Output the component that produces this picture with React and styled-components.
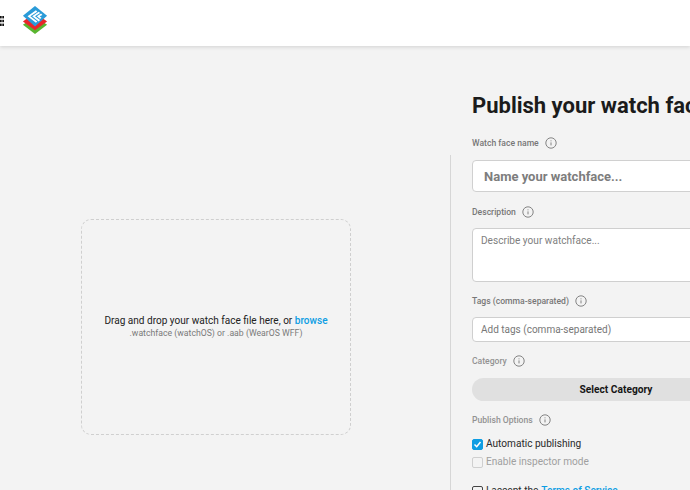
import React from "react";
import styled, { createGlobalStyle } from "styled-components";

const Global = createGlobalStyle`
  html, body { margin: 0; padding: 0; width: 690px; height: 490px; overflow: hidden; background: #f3f3f3; }
  body { font-family: Roboto, "Liberation Sans", sans-serif; color: #1a1a1a; }
  * { box-sizing: border-box; }
`;

const Header = styled.header`
  height: 46px; background: #fff; display: flex; align-items: center;
  box-shadow: 0 1px 4px rgba(0,0,0,.14); position: relative;
`;
const Grip = styled.svg`
  width: 4px; height: 10px; flex: none; align-self: flex-start; margin: 16px 18px 0 0; display: block;
`;
const Logo = styled.svg`
  width: 26px; height: 28px; flex: none; margin-bottom: 6px; display: block;
`;
const Main = styled.main`display: flex; align-items: flex-start;`;
const LeftPane = styled.section`
  flex: none; width: 451px; height: 335px; margin-top: 109px; border-right: 1px solid #d6d6d6;
  padding: 64px 0 0 81px;
`;
const Dropzone = styled.div`
  width: 270px; height: 216px; border: 1px dashed #cfcfcf; border-radius: 10px;
  display: flex; flex-direction: column; align-items: center; justify-content: center; padding-bottom: 1px;
`;
const DropText = styled.div`font-size: 10.05px; line-height: 13px; color: #222; white-space: nowrap;`;
const Browse = styled.a`color: #0d9de3; font-weight: 500;`;
const DropHint = styled.div`font-size: 8.7px; line-height: 11px; color: #7a7a7a; margin-top: 1px; white-space: nowrap;`;
const RightPane = styled.section`
  flex: none; width: 520px; margin-left: 21px; padding-top: 46px;
`;
const Title = styled.h1`
  font-size: 22px; line-height: 28px; font-weight: 700; margin: 0 0 16px; color: #1b1b1b; white-space: nowrap;
`;
const LabelRow = styled.div`
  display: flex; align-items: center; gap: 6px; height: 14px;
  font-size: 8.6px; font-weight: 500; color: ${p => p.$muted ? "#929292" : "#777"};
  margin-top: ${p => p.$top || 0}px;
`;
const InfoIcon = styled.svg`width: 12px; height: 12px; flex: none;`;
const NameInput = styled.div`
  height: 32px; margin-top: 10px; background: #fff; border: 1px solid #d0d0d0; border-radius: 4px;
  display: flex; align-items: center; padding-left: 11px; font-size: 13px; font-weight: 700; color: #7d7d7d;
`;
const TextArea = styled.div`
  height: 54px; margin-top: 9px; background: #fff; border: 1px solid #cfcfcf; border-radius: 4px;
  padding: 5px 8px; font-size: 10.1px; line-height: 14px; color: #808080;
`;
const TagsInput = styled.div`
  height: 25px; margin-top: 9px; background: #fff; border: 1px solid #cfcfcf; border-radius: 4px;
  display: flex; align-items: center; padding-left: 8px; font-size: 10px; color: #777;
`;
const SelectButton = styled.button`
  display: block; width: 288px; height: 23px; margin-top: 10px; border: 0; border-radius: 12px; background: #e0e0e0;
  font-family: inherit; font-size: 10.2px; font-weight: 700; color: #161616; padding: 0;
`;
const CheckRow = styled.label`
  display: flex; align-items: center; gap: 3px; height: 18px; font-size: 10.1px;
  color: ${p => p.$disabled ? "#a0a0a0" : "#2a2a2a"}; margin-top: ${p => p.$top || 0}px;
`;
const Box = styled.span`
  width: 11px; height: 11px; border-radius: 2px; flex: none; display: flex; align-items: center; justify-content: center;
  margin-top: 2px;
  background: ${p => p.$checked ? "#0d9de3" : "transparent"};
  border: 1px solid ${p => p.$checked ? "#0d9de3" : p.$disabled ? "#cfcfcf" : "#444"};
`;
const Terms = styled.a`color: #0d9de3; font-weight: 500;`;

const Info = () => (
  <InfoIcon viewBox="0 0 12 12" fill="none" stroke="#777" strokeWidth="0.9">
    <circle cx="6" cy="6" r="5.2" />
    <path d="M6 5.4v3" />
    <path d="M6 3.4v.9" />
  </InfoIcon>
);

export default function App() {
  return (
    <>
      <Global />
      <Header>
        <Grip viewBox="0 0 4 10" fill="#111">
          <rect x="0" y="0" width="1.7" height="2.4" />
          <rect x="2.3" y="0" width="1.7" height="2.4" />
          <rect x="0" y="3.8" width="1.7" height="2.4" />
          <rect x="2.3" y="3.8" width="1.7" height="2.4" />
          <rect x="0" y="7.6" width="1.7" height="2.4" />
          <rect x="2.3" y="7.6" width="1.7" height="2.4" />
        </Grip>
        <Logo viewBox="0 0 28 30">
          <path d="M14 11 27 20 14 30 1 20Z" fill="#59b52f" />
          <path d="M14 7 27 16.500 14 26 1 16.500Z" fill="#e8262a" />
          <path d="M14 0 27 10.500 14 22 1 10.500Z" fill="#2a9bd8" />
          <path d="M6 11 15 4.500 16.500 6 9 11 16.500 16.500 15 18Z" fill="#fff" />
          <path d="M11 11 18 6 19.500 7.500 14 11 19.500 15 18 16.500Z" fill="#fff" />
          <path d="M16 11 20.500 8 22 9.500 19 11 21 12.500 19.500 14Z" fill="#fff" />
        </Logo>
      </Header>
      <Main>
        <LeftPane>
          <Dropzone>
            <DropText>Drag and drop your watch face file here, or <Browse>browse</Browse></DropText>
            <DropHint>.watchface (watchOS) or .aab (WearOS WFF)</DropHint>
          </Dropzone>
        </LeftPane>
        <RightPane>
          <Title>Publish your watch face</Title>
          <LabelRow>Watch face name <Info /></LabelRow>
          <NameInput>Name your watchface...</NameInput>
          <LabelRow $top={13}>Description <Info /></LabelRow>
          <TextArea>Describe your watchface...</TextArea>
          <LabelRow $top={12}>Tags (comma-separated) <Info /></LabelRow>
          <TagsInput>Add tags (comma-separated)</TagsInput>
          <LabelRow $top={12} $muted>Category <Info /></LabelRow>
          <SelectButton>Select Category</SelectButton>
          <LabelRow $top={12} $muted>Publish Options <Info /></LabelRow>
          <CheckRow $top={7}><Box $checked><svg width="9" height="9" viewBox="0 0 9 9" fill="none" stroke="#fff" strokeWidth="1.500"><path d="M1.500 4.500 3.700 6.700 7.500 2" /></svg></Box>Automatic publishing</CheckRow>
          <CheckRow $disabled><Box $disabled />Enable inspector mode</CheckRow>
          <CheckRow $top={11}><Box />I accept the <Terms>Terms of Service</Terms></CheckRow>
        </RightPane>
      </Main>
    </>
  );
}
